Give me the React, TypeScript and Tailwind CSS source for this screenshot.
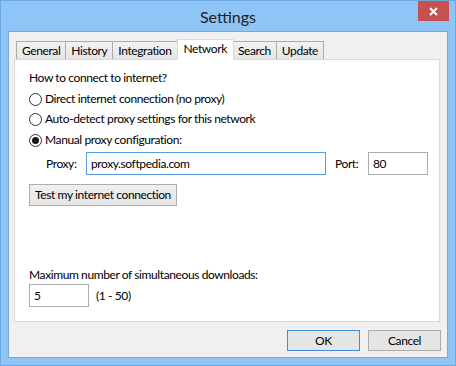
import React from "react";

const tabs = ["General", "History", "Integration", "Network", "Search", "Update"];

function Radio({ checked, label }: { checked?: boolean; label: string }) {
  return (
    <div className="flex items-center h-[20px]">
      <span className="w-[13px] h-[13px] rounded-full border border-[#333] bg-white flex items-center justify-center mr-[3px]">
        {checked && <span className="w-[7px] h-[7px] rounded-full bg-[#1a1a1a]" />}
      </span>
      <span>{label}</span>
    </div>
  );
}

export default function App() {
  return (
    <div
      className="w-[456px] h-[366px] bg-[#8ec4f6] border border-[#6aa8e0] flex flex-col text-[12px] leading-[16px] tracking-[-0.4px] text-black"
      style={{ fontFamily: 'Lato, "Noto Sans", sans-serif' }}
    >
      {/* title bar */}
      <div className="relative h-[30px] flex items-center justify-center">
        <span className="text-[16px] tracking-normal text-[#222] mt-[1px]">Settings</span>
        <div className="absolute right-[6px] top-0 w-[31px] h-[20px] bg-[#c75050] flex items-center justify-center">
          <svg width="9" height="9" viewBox="0 0 9 9">
            <path d="M1 1 L8 8 M8 1 L1 8" stroke="white" strokeWidth="2" />
          </svg>
        </div>
      </div>

      {/* client area */}
      <div className="mx-[7px] mb-[7px] flex-1 bg-[#f0f0f0] border border-[#7fa8d0] flex flex-col px-[5px] pt-[6px]">
        {/* tabs */}
        <div className="flex items-end h-[21px] relative z-10 ml-[2px]">
          {tabs.map((t) => {
            const sel = t === "Network";
            return sel ? (
              <div
                key={t}
                className="h-[21px] px-[6px] -mb-px -mx-[1px] bg-white border border-[#d9d9d9] border-b-white flex items-start pt-[1px] relative z-10"
              >
                {t}
              </div>
            ) : (
              <div
                key={t}
                className="h-[18px] px-[5px] -ml-px first:ml-0 bg-gradient-to-b from-[#f2f2f2] to-[#e6e6e6] border border-[#acacac] border-b-0 flex items-center"
              >
                {t}
              </div>
            );
          })}
        </div>

        {/* panel */}
        <div className="h-[263px] mr-[2px] bg-white border border-[#d9d9d9] pl-[14px] pt-[10px] flex flex-col">
          <div>How to connect to internet?</div>
          <div className="mt-[3px] flex flex-col">
            <Radio label="Direct internet connection (no proxy)" />
            <Radio label="Auto-detect proxy settings for this network" />
            <div className="mt-[1px]">
              <Radio checked label="Manual proxy configuration:" />
            </div>
          </div>
          <div className="flex items-center mt-[2px] ml-[17px]">
            <span className="w-[40px]">Proxy:</span>
            <div className="w-[240px] h-[23px] border border-[#569de5] px-[4px] flex items-center">
              proxy.softpedia.com
            </div>
            <span className="ml-[9px] w-[33px]">Port:</span>
            <div className="w-[60px] h-[23px] border border-[#abadb3] px-[4px] flex items-center">80</div>
          </div>
          <div className="mt-[9px]">
            <button className="h-[22px] w-[148px] whitespace-nowrap border border-[#acacac] bg-gradient-to-b from-[#f0f0f0] to-[#e5e5e5] text-[12px]">
              Test my internet connection
            </button>
          </div>
          <div className="mt-[61px]">Maximum number of simultaneous downloads:</div>
          <div className="flex items-center mt-[1px]">
            <div className="w-[60px] h-[23px] border border-[#abadb3] px-[4px] flex items-center">5</div>
            <span className="ml-[7px]">(1 - 50)</span>
          </div>
        </div>

        {/* footer buttons */}
        <div className="flex justify-end gap-[8px] mt-[8px] mr-[1px]">
          <button className="w-[73px] h-[21px] border border-[#3c8fe0] bg-[#e5e5e5] text-[12px]">OK</button>
          <button className="w-[73px] h-[21px] border border-[#acacac] bg-[#e5e5e5] text-[12px]">Cancel</button>
        </div>
      </div>
    </div>
  );
}
